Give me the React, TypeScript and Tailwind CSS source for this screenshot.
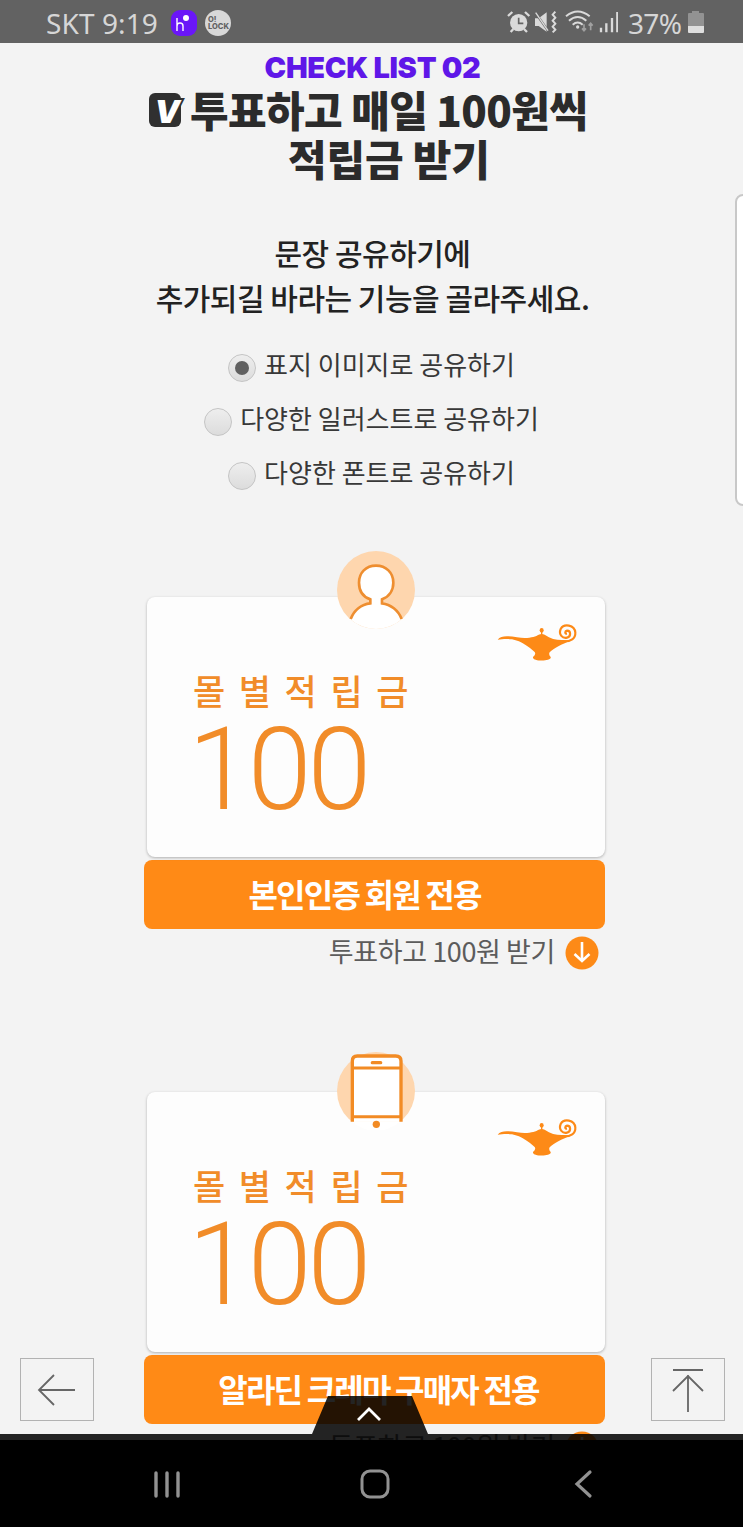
import { useState } from 'react';

type CardIcon = 'member' | 'reader';

interface RewardCardProps {
  icon: CardIcon;
  label: string;
}

const OPTIONS = ['표지 이미지로 공유하기', '다양한 일러스트로 공유하기', '다양한 폰트로 공유하기'];

// Status bar icons
const StatusIcons = () => (
  <svg className="h-[26px] w-[112px]" viewBox="400 29 336 78" fill="none" stroke="#dadada">
    <circle cx="438" cy="67" r="26" fill="#dadada" stroke="none" />
    <path d="M438 52v17h14" stroke="#646464" strokeWidth="5" />
    <path d="M406 47l13-12M457 35l13 12M422 86l-8 9M454 86l9 9" strokeWidth="7" />
    <path d="M487 54h11l24-18v58l-24-17h-11z" fill="#dadada" stroke="none" />
    <path d="M486 34l42 60" stroke="#646464" strokeWidth="7" />
    <path d="M489 37l37 54" strokeWidth="4" />
    <path d="M548 34l-8 9 8 9-8 9 8 9-8 9 8 9-8 8" strokeWidth="6" />
    <path d="M580 48q35-29 71 0M589 61q26-22 52 0M600 73q15-13 30 0" strokeWidth="6" />
    <circle cx="615" cy="80" r="5" fill="#dadada" stroke="none" />
    <path d="M634 72v18m-6-6l6 7 6-7M654 90V70m-6 6l6-7 6 7" stroke="#a0a0a0" strokeWidth="5" />
    <path d="M685 82v14M701 69v27M718 53v43M734 35v61" strokeWidth="7" />
  </svg>
);

const StatusBar = () => (
  <header className="flex h-[43px] shrink-0 items-center bg-[#626262] pt-0.5 font-['Noto_Sans'] text-[#d6d6d6]">
    <span className="ml-[46px] w-[113px] text-[28px] leading-none tracking-[0.1px] whitespace-nowrap">SKT 9:19</span>
    <svg className="ml-3 size-[26px]" viewBox="0 0 26 26">
      <rect width="26" height="26" rx="9" fill="#6a16f8" />
      <path d="M6 8v13M6 16q0-3 3-3t3 3v5" fill="none" stroke="#fff" strokeWidth="1.4" />
      <circle cx="15" cy="8" r="3" fill="#fff" />
    </svg>
    <span className="ml-2 flex size-[26px] flex-col justify-center rounded-full bg-[#d8d8d8] pl-[3px] font-['Inter'] text-[7.5px] leading-[7px] font-extrabold text-[#626262]">
      <span>O!</span>
      <span>LOCK</span>
    </span>
    <div className="ml-auto flex items-center">
      <StatusIcons />
      <span className="ml-2.5 w-[54px] text-[28px] leading-none tracking-[-0.7px]">37%</span>
      <svg className="mr-[39px] ml-1.5 h-[23px] w-4" viewBox="0 0 16 23">
        <path d="M4 0h7v2h4q1 0 1 1v12H0V3q0-1 1-1h3z" fill="#929292" />
        <path d="M0 15h16v6q0 1-1 1H1q-1 0-1-1z" fill="#dedede" />
      </svg>
    </div>
  </header>
);

const Lamp = () => (
  <svg className="h-[38px] w-20" viewBox="530 250 240 114" fill="#fd8a17">
    <path d="M532 300C542 287 562 288 590 293C625 298 645 291 655 285Q664 281 673 285C692 298 710 302 730 301L750 303C725 314 700 324 688 338Q684 344 691 352C696 366 634 366 638 352Q648 344 643 337C625 322 605 305 575 299C555 296 545 299 532 300Z" />
    <ellipse cx="664" cy="272" rx="6" ry="7" />
    <path d="M664 274v12" stroke="#fd8a17" strokeWidth="4" />
    <path
      d="M726 305C752 307 766 296 765 279C763 254 730 251 721 268C714 285 727 297 740 294C753 290 752 273 740 273C733 274 733 283 740 282"
      fill="none"
      stroke="#fd8a17"
      strokeWidth="6.5"
    />
  </svg>
);

const MemberIcon = () => (
  <svg className="size-[78px]" viewBox="51 33 234 234">
    <circle cx="168" cy="150" r="117" fill="#fed6ae" />
    <path d="M90 237A117 117 0 0 0 246 237Z" fill="#fff" />
    <path
      d="M92 237C102 211 124 193 151 190V178C128 170 117 150 117 128C117 98 138 77 168 77S220 98 220 128C220 150 208 170 186 178V190C212 193 235 211 245 237"
      fill="#fff"
      stroke="#ee8e30"
      strokeWidth="8"
    />
  </svg>
);

const ReaderIcon = () => (
  <svg className="size-[78px]" viewBox="51 35 234 234">
    <circle cx="168" cy="152" r="117" fill="#fed6ae" />
    <path d="M92 243A117 117 0 0 0 244 243Z" fill="#fff" />
    <path d="M97 244V62Q97 47 112 47H227Q243 47 243 62V244" fill="#fff" stroke="#f28b24" strokeWidth="10" />
    <path d="M97 83H243M97 229H243" stroke="#f28b24" strokeWidth="9" />
    <path d="M157 67H182" stroke="#f28b24" strokeWidth="10" strokeLinecap="round" />
    <circle cx="169" cy="252" r="11" fill="#f28b24" />
  </svg>
);

const RewardCard = ({ icon, label }: RewardCardProps) => (
  <section className="ml-[144px] w-[461px]">
    <div className="relative ml-[3px] h-[260px] rounded-lg bg-[#fdfdfd] pt-[69px] pl-[46px] text-[#f18c29] shadow-[0_1px_3px_rgba(0,0,0,0.28)]">
      {icon === 'member' ? (
        <div className="absolute -top-[46px] left-[190px]">
          <MemberIcon />
        </div>
      ) : (
        <div className="absolute -top-10 left-[190px]">
          <ReaderIcon />
        </div>
      )}
      <div className="absolute top-[26px] left-[350px]">
        <Lamp />
      </div>
      <p className="h-[50px] text-[35px] leading-[48px] font-medium tracking-[13.6px]">몰별적립금</p>
      <p className="-ml-[5px] pt-px font-['Roboto'] text-[115px] leading-[106px] font-light tracking-[-4px]">100</p>
    </div>
    <button
      className={`mt-[3px] block h-[69px] w-full rounded-lg bg-[#ff8a16] pb-1 text-center text-[32px] font-bold tracking-[-1.8px] text-white ${
        icon === 'member' ? 'pr-5' : 'pl-2'
      }`}
    >
      {label}
    </button>
    <div className="flex h-12 items-center justify-end pr-1.5 text-[#5c5c5c]">
      <span className="-mt-[3px] text-[27px] tracking-[-0.4px] whitespace-nowrap">투표하고 100원 받기</span>
      <svg className="ml-2.5 size-[34px]" viewBox="0 0 34 34" fill="none" stroke="#fff" strokeWidth="2.6">
        <circle cx="17" cy="17" r="16.5" fill="#fd8a17" stroke="none" />
        <path d="M17 6v19M9.500 18l7.500 7 7.500-7" />
      </svg>
    </div>
  </section>
);

const App = () => {
  const [selected, setSelected] = useState(0);

  return (
    <div className="relative flex h-[1527px] w-[743px] flex-col overflow-hidden bg-[#f3f3f3] font-['Noto_Sans_CJK_KR',sans-serif]">
      <StatusBar />

      <main className="h-[1397px] overflow-hidden">
        <div className="flex flex-col">
          <h2 className="mt-[10px] h-[31px] pl-0.5 text-center font-['Inter'] text-[29px] leading-[30px] font-black tracking-[-0.3px] text-[#5f17e8]">
            CHECK LIST 02
          </h2>
          <h1 className="flex flex-col text-[42px] leading-[49px] font-black tracking-[-0.6px] whitespace-nowrap text-[#2b2b2b]">
            <span className="ml-[149px] flex items-center">
              <span className="mt-0.5 mr-[9px] flex h-[34px] w-8 items-center justify-center rounded-md bg-[#303030] pt-1 pl-1 font-['Inter'] text-[32px] leading-[30px] text-white italic [-webkit-text-stroke:4px_#303030] [paint-order:stroke_fill]">
                V
              </span>
              투표하고 매일 100원씩
            </span>
            <span className="ml-[288px] tracking-[-0.2px]">적립금 받기</span>
          </h1>

          <p className="mt-12 pl-0.5 text-center text-[30px] leading-[45px] font-medium tracking-[-0.5px] text-[#222]">
            문장 공유하기에
            <br />
            추가되길 바라는 기능을 골라주세요.
          </p>

          <div className="mt-[19px] flex flex-col text-[26px] text-[#383838]">
            {OPTIONS.map((option, i) => (
              <button
                key={option}
                className="flex h-[54px] items-center justify-center gap-2 leading-none"
                onClick={() => setSelected(i)}
              >
                <span className="mt-1 flex size-7 items-center justify-center rounded-full border border-[#c4c4c4] bg-linear-to-b from-[#eee] to-[#dcdcdc]">
                  {selected === i && <span className="size-3.5 rounded-full bg-[#606060]" />}
                </span>
                <span className="-mt-1">{option}</span>
              </button>
            ))}
          </div>

          <div className="mt-24 flex flex-col gap-[115px]">
            <RewardCard icon="member" label="본인인증 회원 전용" />
            <RewardCard icon="reader" label="알라딘 크레마 구매자 전용" />
          </div>
        </div>
      </main>

      {/* Edge panel handle */}
      <div className="absolute top-[194px] -right-3 h-[312px] w-5 rounded-lg border-2 border-[#c8c8c8] bg-white" />

      {/* Floating page buttons */}
      <button className="absolute top-[1358px] left-5 flex h-[63px] w-[74px] items-center justify-center border border-[#b2b2b2] bg-[#f3f3f3]">
        <svg className="h-8 w-10" viewBox="0 0 40 32" fill="none" stroke="#666" strokeWidth="1.8">
          <path d="M38 16H3M17 1L2 16l15 15" />
        </svg>
      </button>
      <button className="absolute top-[1358px] left-[651px] flex h-[63px] w-[74px] items-center justify-center border border-[#b2b2b2] bg-[#f3f3f3]">
        <svg className="h-11 w-8" viewBox="0 0 32 44" fill="none" stroke="#666" strokeWidth="1.8">
          <path d="M1 2h30M16 44V7M1 23L16 8l15 15" />
        </svg>
      </button>

      {/* Browser toolbar handle */}
      <svg className="absolute top-[1396px] left-0 h-11 w-[743px]" viewBox="0 0 743 44" fill="none">
        <path d="M0 38H312L328 0H412L428 38H743V44H0Z" fill="#000" fillOpacity="0.86" />
        <path d="M358 24l11-11 11 11" stroke="#fff" strokeWidth="2.8" />
      </svg>

      <nav className="flex h-[87px] shrink-0 items-center bg-black text-[#929292]">
        <svg className="ml-[153px] h-7 w-7" viewBox="0 0 28 28" stroke="currentColor" strokeWidth="3.4" strokeLinecap="round">
          <path d="M3 3v23M14 3v23M25 3v23" />
        </svg>
        <svg className="ml-[179px] size-[30px]" viewBox="0 0 30 30" fill="none" stroke="currentColor" strokeWidth="3">
          <rect x="2" y="2" width="26" height="26" rx="8" />
        </svg>
        <svg className="ml-[184px] h-[30px] w-5" viewBox="0 0 20 30" fill="none" stroke="currentColor" strokeWidth="3.2" strokeLinecap="round">
          <path d="M16 3L3 15l13 12" />
        </svg>
      </nav>
    </div>
  );
};

export default App;
